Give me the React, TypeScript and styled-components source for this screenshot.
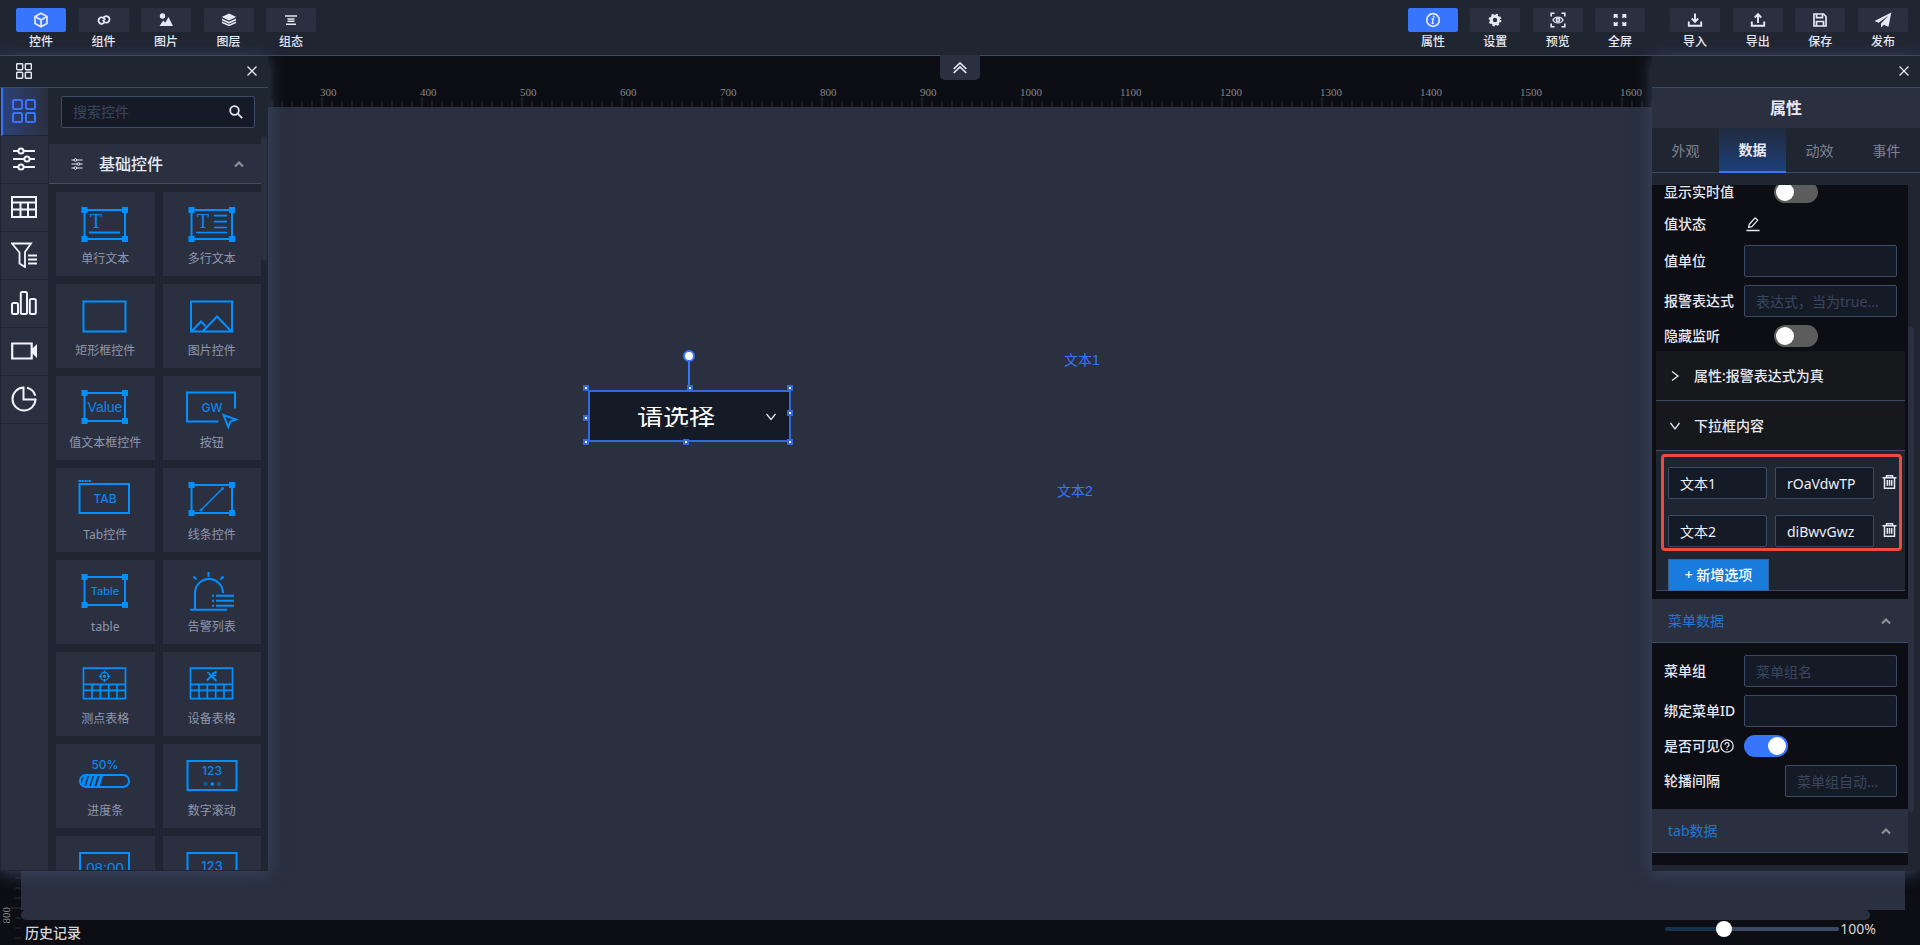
import React, { useState } from 'react';
import styled, { createGlobalStyle, css } from 'styled-components';

const color = {
  panel: '#202532',
  raised: '#2b3040',
  canvas: '#2a3040',
  ink: '#0d0e13',
  field: '#151b26',
  line: '#3d4a66',
  blue: '#3875ff',
  icon: '#0090ff',
  text: '#e6e9f5',
};

const GlobalStyle = createGlobalStyle`
  *, *::before, *::after { box-sizing: border-box; }
  html, body, #root { height: 100%; }
  body {
    margin: 0;
    background: ${color.ink};
    color: ${color.text};
    font: 14px/20px "Noto Sans", "Noto Sans CJK SC", sans-serif;
    overflow: hidden;
  }
  button, input, select { font: inherit; color: inherit; }
  button { border: 0; padding: 0; background: none; cursor: pointer; }
  svg { display: block; flex: none; }
`;

const Page = styled.div`
  display: flex;
  flex-direction: column;
  height: 100vh;
`;

/* ---------- header ---------- */

const Header = styled.header`
  display: flex;
  justify-content: space-between;
  height: 56px;
  padding: 8px 12px 0 16px;
  background: ${color.panel};
  border-bottom: 1px solid ${color.line};
`;

const ToolGroups = styled.div`
  display: flex;
  gap: 25px;
`;

const ToolGroup = styled.nav<{ $width: number }>`
  display: flex;
  justify-content: space-between;
  width: ${(p) => p.$width}px;
`;

const ToolButton = styled.button`
  display: flex;
  flex-direction: column;
  align-items: center;
  width: 50px;
  height: 44px;
  font-size: 12px;
  line-height: 20px;
  font-weight: 500;
`;

const ToolChip = styled.span<{ $active?: boolean }>`
  display: flex;
  align-items: center;
  justify-content: center;
  width: 50px;
  height: 24px;
  border-radius: 2px;
  background: ${(p) => (p.$active ? color.blue : color.raised)};
`;

/* ---------- workspace ---------- */

const Workspace = styled.main`
  position: relative;
  flex: 1;
  min-height: 0;
  display: grid;
  grid-template-columns: 21px minmax(0, 1fr);
  grid-template-rows: 51px minmax(0, 1fr) 10px 25px;
`;

const TopRuler = styled.div`
  grid-column: 2;
  display: flex;
  align-items: flex-end;
  overflow: hidden;
  background: repeating-linear-gradient(to right, #1b1d22 0 2px, transparent 2px 10px) 0 100% / 100% 6px no-repeat;
`;

const TopMark = styled.span`
  flex: 0 0 100px;
  height: 21px;
  color: #85868a;
  font: 11px/12px "Liberation Serif", serif;
  text-indent: -1px;
  background: linear-gradient(#1b1d22, #1b1d22) 0 100% / 2px 10px no-repeat;
`;

const SideRuler = styled.div`
  grid-column: 1;
  grid-row: 2 / 5;
  overflow: hidden;
  background: repeating-linear-gradient(to bottom, #1b1d22 0 2px, transparent 2px 10px) 100% 0 / 6px 100% no-repeat;
`;

const SideMark = styled.span`
  display: flex;
  align-items: flex-start;
  height: 100px;
  color: #85868a;
  font: 11px/12px "Liberation Serif", serif;
  background: linear-gradient(#1b1d22, #1b1d22) 100% 0 / 11px 2px no-repeat;

  span {
    writing-mode: vertical-rl;
    transform: rotate(180deg);
  }
`;

const Canvas = styled.section`
  position: relative;
  grid-column: 2;
  grid-row: 2;
  margin-right: 15px;
  background: ${color.canvas};
`;

const CanvasScroll = styled.div`
  grid-column: 2;
  grid-row: 3;
  margin-right: 50px;
  border-radius: 5px;
  background: ${color.raised};
`;

const Footer = styled.footer`
  grid-column: 2;
  grid-row: 4;
  display: flex;
  justify-content: space-between;
  padding: 0 44px 0 4px;
`;

const HistoryButton = styled.button`
  height: 25px;
  font-weight: 500;
  color: #d5d6da;
`;

const Zoom = styled.label`
  display: flex;
  align-items: center;
  gap: 1px;
  height: 18px;
  color: #d5d6da;
`;

const ZoomRange = styled.input`
  appearance: none;
  width: 174px;
  height: 4px;
  margin: 0;
  border-radius: 2px;

  &::-webkit-slider-thumb {
    appearance: none;
    width: 16px;
    height: 16px;
    border-radius: 50%;
    background: #fff;
  }
`;

const FoldButton = styled.button`
  position: absolute;
  top: -1px;
  left: calc(50% - 20px);
  width: 40px;
  height: 25px;
  display: flex;
  align-items: center;
  justify-content: center;
  border-radius: 0 0 5px 5px;
  background: ${color.raised};
`;

const CanvasLabel = styled.span<{ $x: number; $y: number }>`
  position: absolute;
  left: ${(p) => p.$x}px;
  top: ${(p) => p.$y}px;
  color: ${color.blue};
  font-family: "Liberation Sans", "Noto Sans CJK SC", sans-serif;
`;

const Selection = styled.div`
  position: absolute;
  left: 567px;
  top: 283px;
  width: 203px;
  height: 52px;
  border: 2px solid #3568d8;
  background: ${color.field};

  svg.chevron {
    position: absolute;
    right: 13px;
    top: 20px;
  }
`;

const CanvasSelect = styled.select`
  appearance: none;
  width: 100%;
  height: 48px;
  padding: 2px 27px 0 0;
  border: 0;
  outline: 0;
  background: transparent;
  color: #fff;
  font-size: 26px;
  text-align-last: center;
`;

const Handle = styled.i<{ $x: number; $y: number }>`
  position: absolute;
  left: ${(p) => p.$x}px;
  top: ${(p) => p.$y}px;
  width: 6px;
  height: 6px;
  border: 2px solid #3568d8;
  background: #fff;
`;

const RotateStem = styled.i`
  position: absolute;
  left: 98px;
  top: -30px;
  width: 2px;
  height: 26px;
  background: ${color.blue};
`;

const RotateKnob = styled.i`
  position: absolute;
  left: 93px;
  top: -42px;
  width: 12px;
  height: 12px;
  border: 2px solid ${color.blue};
  border-radius: 50%;
  background: #fff;
`;

/* ---------- floating panels ---------- */

const Panel = styled.aside<{ $side: 'left' | 'right' }>`
  position: absolute;
  ${(p) => p.$side}: 0;
  top: 0;
  bottom: 74px;
  width: 268px;
  display: flex;
  flex-direction: column;
  background: ${color.panel};
  box-shadow: 0 2px 16px #3a4763;
  clip-path: inset(-12px -24px -24px -24px);
`;

const PanelBar = styled.div`
  display: flex;
  flex: none;
  align-items: center;
  justify-content: space-between;
  height: 32px;
  padding: 0 11px 1px 16px;
  border-bottom: 1px solid ${color.line};
`;

const IconButton = styled.button`
  display: flex;
  align-items: center;
  justify-content: center;
`;

const PaletteBody = styled.div`
  display: flex;
  flex: 1;
  min-height: 0;
  padding: 0 1px 1px 1px;
`;

const Rail = styled.nav`
  flex: 0 0 47px;
  background: ${color.raised};
`;

const RailButton = styled.button<{ $active?: boolean }>`
  display: flex;
  align-items: center;
  justify-content: center;
  width: 100%;
  height: 48px;
  padding: 0 1px 1px 0;
  border-bottom: 1px solid ${color.panel};
  color: #f1f4ff;
  ${(p) =>
    p.$active &&
    css`
      padding-right: 3px;
      border-left: 2px solid ${color.blue};
      background: linear-gradient(to right, #2c4176, ${color.raised});
      color: ${color.blue};
    `}
`;

const Palette = styled.div`
  display: flex;
  flex: 1;
  flex-direction: column;
  min-width: 0;
  margin-left: 1px;
`;

const SearchBox = styled.label`
  display: flex;
  flex: none;
  align-items: center;
  height: 32px;
  margin: 8px 12px;
  padding: 0 11px;
  border: 1px solid ${color.line};
  border-radius: 2px;
  background: ${color.field};

  input {
    flex: 1;
    min-width: 0;
    padding: 0;
    border: 0;
    outline: 0;
    background: none;
  }
  input::placeholder { color: #3a4560; }
`;

const PaletteScroll = styled.div`
  display: flex;
  flex: 1;
  min-height: 0;
`;

const PaletteList = styled.div`
  flex: 1;
  overflow: hidden;
  padding-top: 8px;
`;

const ScrollThumb = styled.div<{ $height: string; $top?: string }>`
  flex: 0 0 6px;
  height: ${(p) => p.$height};
  margin-top: ${(p) => p.$top ?? 0};
  border-radius: 3px;
  background: ${color.raised};
`;

const GroupHeader = styled.button`
  display: flex;
  align-items: center;
  width: 100%;
  height: 40px;
  padding: 0 17px 0 22px;
  border-bottom: 1px solid #434c60;
  background: ${color.raised};
  font-size: 16px;
  font-weight: 500;

  span {
    flex: 1;
    padding-left: 16px;
    text-align: left;
  }
`;

const CardGrid = styled.div`
  display: grid;
  grid-template-columns: 1fr 1fr;
  gap: 8px;
  padding: 8px 0 0 7px;
`;

const Card = styled.button`
  display: flex;
  flex-direction: column;
  align-items: center;
  gap: 3px;
  height: 84px;
  padding-top: 11px;
  background: ${color.raised};
  color: #8f97ad;
  font-size: 12px;
  line-height: 18px;
`;

/* ---------- property panel ---------- */

const PanelTitle = styled.h2`
  flex: none;
  margin: 0;
  height: 40px;
  background: ${color.raised};
  font-size: 16px;
  line-height: 40px;
  font-weight: 700;
  text-align: center;
`;

const Tabs = styled.div`
  display: grid;
  flex: none;
  grid-template-columns: repeat(4, 1fr);
  height: 45px;
  border-bottom: 1px solid ${color.line};
`;

const Tab = styled.button<{ $active?: boolean }>`
  height: 45px;
  color: #7f8390;
  ${(p) =>
    p.$active &&
    css`
      color: ${color.text};
      font-weight: 700;
      border-bottom: 2px solid ${color.blue};
      background: linear-gradient(#202a3e, #1d3f78);
    `}
`;

const PropsBody = styled.div`
  display: flex;
  flex: 1;
  min-height: 0;
  padding: 12px 6px 6px 0;
`;

const PropsScroll = styled.div`
  flex: 1;
  min-width: 0;
  overflow: hidden;
  background: ${color.ink};
`;

const Fields = styled.div<{ $scrolled?: boolean }>`
  display: flex;
  flex-direction: column;
  gap: 8px;
  margin-top: ${(p) => (p.$scrolled ? '-4px' : 0)};
  padding: ${(p) => (p.$scrolled ? '0 11px 4px 12px' : '12px 11px 12px 12px')};
`;

const Field = styled.div<{ $height: number }>`
  display: flex;
  align-items: center;
  height: ${(p) => p.$height}px;
`;

const FieldLabel = styled.label`
  display: flex;
  flex: 0 0 80px;
  align-items: center;
  font-weight: 500;
  white-space: nowrap;
`;

const TextInput = styled.input<{ $indent?: boolean }>`
  flex: 1;
  min-width: 0;
  width: 100%;
  height: 32px;
  margin: 0 0 0 ${(p) => (p.$indent ? '41px' : 0)};
  padding: 0 11px;
  border: 1px solid ${color.line};
  border-radius: 2px;
  outline: 0;
  background: ${color.field};
  color: #eceefa;
  text-overflow: ellipsis;

  &::placeholder { color: #3a4560; }
`;

const Switch = styled.input<{ $indent?: boolean }>`
  appearance: none;
  width: 44px;
  height: 22px;
  margin: 0 0 0 ${(p) => (p.$indent ? '30px' : 0)};
  padding: 2px;
  border-radius: 11px;
  background: #5c5c5c;

  &::before {
    content: '';
    display: block;
    width: 18px;
    height: 18px;
    border-radius: 50%;
    background: #fff;
  }
  &:checked { background: ${color.blue}; }
  &:checked::before { margin-left: auto; }
`;

const Folds = styled.div`
  margin: 0 3px 8px 4px;
  border-radius: 2px;
`;

const FoldHeader = styled.button`
  display: flex;
  align-items: center;
  gap: 13px;
  width: 100%;
  height: 50px;
  padding: 0 13px;
  border-bottom: 1px solid ${color.line};
  background: #17181c;
  font-weight: 500;
`;

const FoldBody = styled.div`
  height: 140px;
  padding: 3px 3px 0 5px;
  border-bottom: 1px solid ${color.line};
  background: ${color.panel};
`;

const OptionFrame = styled.div`
  display: flex;
  flex-direction: column;
  gap: 16px;
  height: 97px;
  padding: 10px 2px 0 4px;
  border: 3px solid #ef4a41;
  border-radius: 4px;
`;

const OptionRow = styled.div`
  display: grid;
  grid-template-columns: 1fr 1fr 15px;
  column-gap: 8px;
`;

const OptionDelete = styled(IconButton)`
  height: 30px;
`;

const AddButton = styled.button`
  width: 101px;
  height: 32px;
  margin: 8px 0 0 7px;
  border: 1px solid #3a5f96;
  background: #197bdb;
  color: #fff;
  font-weight: 500;
`;

const SectionHeader = styled.button`
  display: flex;
  align-items: center;
  justify-content: space-between;
  width: 100%;
  height: 44px;
  padding: 0 17px 0 16px;
  border-bottom: 1px solid ${color.line};
  background: ${color.raised};
  color: #1f78cf;
`;

/* ---------- icons ---------- */

type IconProps = { w?: number; h?: number; box?: string; sw?: number; children: React.ReactNode; className?: string };

const Icon = ({ w = 16, h = w, box, sw = 2, children, className }: IconProps) => (
  <svg width={w} height={h} viewBox={box ?? `0 0 ${w} ${h}`} fill="none" stroke="currentColor" strokeWidth={sw} className={className} aria-hidden="true">
    {children}
  </svg>
);

const GridIcon = ({ size, sw = 2 }: { size: number; sw?: number }) => (
  <Icon w={size} box="0 0 24 24" sw={sw}>
    <rect x="1" y="1" width="9" height="9" rx="1.5" />
    <rect x="14" y="1" width="9" height="9" rx="1.5" />
    <rect x="1" y="14" width="9" height="9" rx="1.5" />
    <rect x="14" y="14" width="9" height="9" rx="1.5" />
  </Icon>
);

const SlidersIcon = ({ size }: { size: number }) => (
  <Icon w={size} box="0 0 24 24">
    <path d="M1 4h5M12 4h11M1 12h11M18 12h5M1 20h5M12 20h11" />
    <circle cx="9" cy="4" r="2.6" />
    <circle cx="15" cy="12" r="2.6" />
    <circle cx="9" cy="20" r="2.6" />
  </Icon>
);

const CloseIcon = () => (
  <Icon w={10} sw={1.3}>
    <path d="M0.5 0.5l9 9M9.5 0.5l-9 9" />
  </Icon>
);

const CaretIcon = () => (
  <Icon w={10} sw={2.2}>
    <path d="M1 7.5l4-4 4 4" stroke="#8d9198" />
  </Icon>
);

const tool = {
  cube: <Icon sw={1.7}><path d="M8 1.2l6 3.2v7.2l-6 3.2-6-3.2V4.4zM2.2 4.6L8 8l5.8-3.4M8 8v6.5" strokeLinejoin="round" /></Icon>,
  link: <Icon sw={1.8}><path d="M8.6 9.9A3.200 3.200 0 1 1 7.700 6.100L9.300 8M7.400 6.100A3.200 3.200 0 1 1 8.300 9.900L6.700 8" /></Icon>,
  picture: <Icon><g fill="currentColor" stroke="none"><circle cx="4.500" cy="4" r="2.700" /><path d="M1.500 14l3.700-5.500 2 2.300L10.500 5 15 14z" /></g></Icon>,
  layers: <Icon sw={1.2}><path d="M8 1.500L15.300 5 8 8.500.7 5z" fill="currentColor" stroke="none" /><path d="M1 7.500l7 3.300 7-3.300M1 10.200l7 3.300 7-3.300" strokeWidth="1.500" /></Icon>,
  lines: <Icon sw={1.4}><path d="M2 4h12M4.500 7h7M4.500 9.200h7M3 12.200h10" /></Icon>,
  info: <Icon sw={1.7}><circle cx="8" cy="8" r="6.300" /><path d="M6.600 7h1.600l-.9 4.200h1.600" strokeWidth="1.400" /><circle cx="8.700" cy="4.700" r="1" fill="currentColor" stroke="none" /></Icon>,
  gear: <Icon sw={3}><circle cx="8" cy="8" r="3.700" /><circle cx="8" cy="8" r="5.500" strokeWidth="1.800" strokeDasharray="2.300 2.020" /></Icon>,
  preview: <Icon sw={1.6}><path d="M1.200 4.500V1.200H4.500M11.500 1.200h3.300V4.500M14.800 11.500v3.300H11.500M4.500 14.800H1.200V11.500" /><path d="M2.800 8c2.600-4 7.800-4 10.400 0-2.600 4-7.800 4-10.400 0z" strokeWidth="1.200" /><circle cx="8" cy="8" r="1.600" /></Icon>,
  full: <Icon sw={1.7}><path d="M2.500 6V2.800h3.200M2.700 3l3 2.700M10.300 2.800h3.200V6M13.300 3l-3 2.700M2.500 10v3.200h3.200M2.700 13l3-2.700M13.500 10v3.200h-3.200M13.300 13l-3-2.700" /></Icon>,
  importing: <Icon sw={1.9}><path d="M1.800 9.500v4.300h12.400V9.500M8 1.500v7M4.800 6.500L8 9.800l3.200-3.300" /></Icon>,
  exporting: <Icon sw={1.9}><path d="M1.800 9.500v4.300h12.400V9.500M8 11V3M4.800 5.500L8 2.200l3.200 3.300" /></Icon>,
  save: <Icon sw={1.7}><path d="M2 2h9.500L14 4.500V14H2zM4.500 14V9.500h7V14" /><path d="M4.500 2v3.700h6V2" /></Icon>,
  send: <Icon w={18} h={16}><path d="M17.300.5L.5 9l4.200 1.800L14.500 3.500l-7.500 8v4l2.800-2.800 4.700 2z" fill="currentColor" stroke="none" /></Icon>,
};

const railIcons: [string, React.ReactNode][] = [
  ['基础控件', <GridIcon size={24} />],
  ['参数', <SlidersIcon size={24} />],
  ['表格', <Icon w={26} h={22}><path d="M1 1h24v20H1zM1 6.500h24M1 13.500h24M9.500 6.500V21M17 6.500V21" /></Icon>],
  ['筛选', <Icon w={26} sw={1.8}><path d="M1 1.500h19l-6 8.500v15l-5.500-3.500V10.500zM17 13.500h9M17 17.500h9M17 21.500h9" /></Icon>],
  ['图表', <Icon w={26} h={24} sw={2}><rect x="1" y="12" width="6" height="11" rx="1.500" /><rect x="9.800" y="1" width="6.200" height="22" rx="1.500" /><rect x="18.800" y="8" width="6" height="15" rx="1.500" /></Icon>],
  ['视频', <Icon w={26} h={18} sw={2.2}><path d="M1.200 1.500h19.500v15H1.200z" /><path d="M21 7l5-5v14l-5-5z" fill="currentColor" stroke="none" /></Icon>],
  ['饼图', <Icon w={26} sw={2}><path d="M12.500 1.500a11.500 11.500 0 1 0 12 12h-12z" /><path d="M16 1.700a11.500 11.500 0 0 1 8.300 8" /></Icon>],
];

/* palette drawings share a 60×44 box */
const Art = ({ children }: { children: React.ReactNode }) => (
  <svg width="60" height="44" viewBox="0 0 60 44" fill="none" stroke={color.icon} strokeWidth="2" fontFamily='"Liberation Sans", sans-serif' aria-hidden="true">
    {children}
  </svg>
);

type WordProps = { x?: number; y: number; size: number; face?: 'plain' | 'medium' | 'slab'; children: string };

const faces = {
  plain: '"Liberation Sans", sans-serif',
  medium: 'Inter, sans-serif',
  slab: '"DejaVu Serif", serif',
};

const Word = ({ x = 30, y, size, face = 'plain', children }: WordProps) => (
  <text x={x} y={y} fontSize={size} fontWeight={face === 'medium' ? 500 : 400} fontFamily={faces[face]} textAnchor="middle" fill="#0a86ec" stroke="none">
    {children}
  </text>
);

const Framed = ({ top, bottom }: { top: number; bottom: number }) => (
  <>
    <rect x="9.500" y={top} width="40.500" height={bottom - top} />
    {[9.5, 50].map((x) => [top, bottom].map((y) => (
      <rect key={`${x}-${y}`} x={x - 3} y={y - 3} width="6" height="6" fill={color.icon} stroke="none" />
    )))}
  </>
);

const TableFrame = () => <path d="M8.500 5.200h42v30.400h-42zM8.500 21.300h42M8.500 27.300h42M17 21.300v14M25.300 21.300v14M33.700 21.300v14M42 21.300v14" strokeWidth="1.700" />;

const cards: [string, React.ReactNode][] = [
  ['单行文本', <><Framed top={7} bottom={36} /><Word x={21} y={25} size={18} face="slab">T</Word><path d="M14 29.500h31" /></>],
  ['多行文本', <><Framed top={7} bottom={36} /><Word x={21} y={25} size={18} face="slab">T</Word><path d="M32 12.700h13M32 18.700h13M32 24.500h13M14 29.500h31" strokeWidth="1.700" /></>],
  ['矩形框控件', <path d="M8.500 6.500h42v30h-42z" />],
  ['图片控件', <path d="M9 6.500h41v30H9zM10 36l9-9.500 4.700 4.700M20.500 36.500L35 21.500l14.500 15" />],
  ['值文本框控件', <><Framed top={6} bottom={34} /><Word y={25} size={14}>Value</Word></>],
  ['按钮', <><path d="M53 21.500V5.500H5v29h31.500" /><path d="M41.500 28l12.500 4.500-5.500 2-2.200 5.500z" /><Word y={25} size={12} face="medium">GW</Word></>],
  ['Tab控件', <><path d="M4.500 5h49.500v29H4.500z" /><path d="M3.500 2h13" strokeDasharray="2.500 0.800" /><Word y={24} size={12} face="medium">TAB</Word></>],
  ['线条控件', <><Framed top={6} bottom={34} /><path d="M19 31L40.500 9.500" strokeWidth="1.500" /><circle cx="19" cy="31" r="0.500" /><circle cx="40.500" cy="9.500" r="0.500" /></>],
  ['table', <><Framed top={6} bottom={34} /><Word y={24} size={11} face="medium">Table</Word></>],
  ['告警列表', <path d="M13 38.500V22a14 14 0 0 1 28 0M8.300 38.700H45M26.500 1v4.700M11.500 5.500l3 3M41.500 5.500l-3 3M34 24.700h18M34 29.700h18M34 34.700h18M30 24.700h2M30 29.700h2M30 34.700h2" />],
  ['测点表格', <><TableFrame /><circle cx="29.500" cy="13.300" r="4" strokeWidth="1.300" /><circle cx="29.500" cy="13.300" r="0.700" /><path d="M29.500 7.500v3M29.500 16v3M23.700 13.300h3M32.300 13.300h3" strokeWidth="1.300" /></>],
  ['设备表格', <><TableFrame /><path d="M25 17.500l4.500-4.500M32 10.500l2.500-2M27 10.500l7.500 7.500" strokeWidth="2" /><path d="M25 9.500l2.500.5M31 9v3.500h3.500" strokeWidth="1.500" /></>],
  ['进度条', <><Word y={14} size={12} face="medium">50%</Word><rect x="5" y="20" width="49" height="12" rx="6" /><path d="M11 20.500L7.500 31M16 20.500L12.500 31.500M21 20.500L17.500 31.500M26.500 20.500L23 31.500" strokeWidth="3.200" /></>],
  ['数字滚动', <><path d="M5.500 6h49v29h-49z" /><Word y={20} size={12} face="medium">123</Word><circle cx="23.700" cy="29" r="1.500" strokeWidth="0.700" /><circle cx="30.300" cy="29" r="1.500" fill={color.icon} strokeWidth="0.700" /><circle cx="37" cy="29" r="1.500" strokeWidth="0.700" /></>],
  ['时钟', <><path d="M5 6h49v29H5z" /><Word y={26} size={15}>08:00</Word></>],
  ['数字', <><path d="M5.500 6h49v29h-49z" /><Word y={24} size={13} face="medium">123</Word></>],
];

const TrashIcon = () => (
  <Icon w={15} h={14} sw={1.5}>
    <path d="M0.500 2.700h14M4.500 2.500V0.800h6v1.700M2.500 3v10.200h10V3M5.300 5v5.700M7.500 5v5.700M9.700 5v5.700" />
  </Icon>
);

const ChevronDown = ({ className }: { className?: string }) => (
  <Icon w={10} sw={1.2} className={className}><path d="M0.500 2l4.500 5.500L9.500 2" /></Icon>
);

const leftTools: [string, React.ReactNode][] = [['控件', tool.cube], ['组件', tool.link], ['图片', tool.picture], ['图层', tool.layers], ['组态', tool.lines]];
const viewTools: [string, React.ReactNode][] = [['属性', tool.info], ['设置', tool.gear], ['预览', tool.preview], ['全屏', tool.full]];
const fileTools: [string, React.ReactNode][] = [['导入', tool.importing], ['导出', tool.exporting], ['保存', tool.save], ['发布', tool.send]];

const Tools = ({ items, width, active }: { items: [string, React.ReactNode][]; width: number; active?: string }) => (
  <ToolGroup $width={width}>
    {items.map(([name, icon]) => (
      <ToolButton key={name}>
        <ToolChip $active={name === active}>{icon}</ToolChip>
        {name}
      </ToolButton>
    ))}
  </ToolGroup>
);

const marks = Array.from({ length: 19 }, (_, i) => i * 100);

const handles = [[-7, -7], [97, -7], [197, -7], [-7, 23], [197, 18], [-7, 47], [93, 47], [197, 47]];

export default function App() {
  const [zoom, setZoom] = useState(32);
  const [options, setOptions] = useState([['文本1', 'rOaVdwTP'], ['文本2', 'diBwvGwz']]);

  const edit = (row: number, col: number, value: string) =>
    setOptions(options.map((o, r) => (r === row ? o.map((v, c) => (c === col ? value : v)) : o)));

  return (
    <Page>
      <GlobalStyle />
      <Header>
        <Tools items={leftTools} width={300} active="控件" />
        <ToolGroups>
          <Tools items={viewTools} width={237} active="属性" />
          <Tools items={fileTools} width={238} />
        </ToolGroups>
      </Header>

      <Workspace>
        <TopRuler>{marks.map((m) => <TopMark key={m}>{m}</TopMark>)}</TopRuler>
        <SideRuler>{marks.slice(0, 9).map((m) => <SideMark key={m}><span>{m}</span></SideMark>)}</SideRuler>

        <Canvas>
          <Selection>
            <CanvasSelect aria-label="下拉框"><option>请选择</option></CanvasSelect>
            <ChevronDown className="chevron" />
            <RotateStem />
            <RotateKnob />
            {handles.map(([x, y]) => <Handle key={`${x},${y}`} $x={x} $y={y} />)}
          </Selection>
          <CanvasLabel $x={1043} $y={243}>文本1</CanvasLabel>
          <CanvasLabel $x={1036} $y={374}>文本2</CanvasLabel>
        </Canvas>
        <CanvasScroll />

        <Footer>
          <HistoryButton>历史记录</HistoryButton>
          <Zoom>
            <ZoomRange
              type="range"
              aria-label="缩放"
              value={zoom}
              onChange={(e) => setZoom(Number(e.target.value))}
              style={{ background: `linear-gradient(to right, #15334f ${zoom}%, ${color.line} ${zoom}%)` }}
            />
            100%
          </Zoom>
        </Footer>

        <FoldButton aria-label="收起">
          <Icon w={14} h={12} sw={1.7}><path d="M0.700 7l6.300-6 6.300 6M0.700 11l6.300-6 6.300 6" /></Icon>
        </FoldButton>

        <Panel $side="left">
          <PanelBar>
            <GridIcon size={16} sw={2.2} />
            <IconButton aria-label="关闭"><CloseIcon /></IconButton>
          </PanelBar>
          <PaletteBody>
            <Rail>
              {railIcons.map(([name, icon], i) => (
                <RailButton key={name} aria-label={name} $active={i === 0}>{icon}</RailButton>
              ))}
            </Rail>
            <Palette>
              <SearchBox>
                <input type="text" aria-label="搜索控件" placeholder="搜索控件" />
                <Icon w={14} sw={1.8}><circle cx="5.500" cy="5.500" r="4.300" /><path d="M8.700 8.700l4.500 4.500" /></Icon>
              </SearchBox>
              <PaletteScroll>
                <PaletteList>
                  <GroupHeader>
                    <SlidersIcon size={12} />
                    <span>基础控件</span>
                    <CaretIcon />
                  </GroupHeader>
                  <CardGrid>
                    {cards.map(([name, art]) => <Card key={name}><Art>{art}</Art>{name}</Card>)}
                  </CardGrid>
                </PaletteList>
                <ScrollThumb $height="17%" />
              </PaletteScroll>
            </Palette>
          </PaletteBody>
        </Panel>

        <Panel $side="right">
          <PanelBar>
            <span />
            <IconButton aria-label="关闭"><CloseIcon /></IconButton>
          </PanelBar>
          <PanelTitle>属性</PanelTitle>
          <Tabs>
            <Tab>外观</Tab>
            <Tab $active>数据</Tab>
            <Tab>动效</Tab>
            <Tab>事件</Tab>
          </Tabs>
          <PropsBody>
            <PropsScroll>
              <Fields $scrolled>
                <Field $height={22}>
                  <FieldLabel htmlFor="live">显示实时值</FieldLabel>
                  <Switch id="live" type="checkbox" $indent />
                </Field>
                <Field $height={26}>
                  <FieldLabel htmlFor="state">值状态</FieldLabel>
                  <IconButton id="state" aria-label="编辑值状态">
                    <Icon w={18} h={16} sw={1.3}><path d="M2.500 14.500h13M5.300 8.300l5.800-6.500 2.600 2.300-5.800 6.500-3.200.8z" /></Icon>
                  </IconButton>
                </Field>
                <Field $height={32}>
                  <FieldLabel htmlFor="unit">值单位</FieldLabel>
                  <TextInput id="unit" />
                </Field>
                <Field $height={32}>
                  <FieldLabel htmlFor="alarm">报警表达式</FieldLabel>
                  <TextInput id="alarm" placeholder="表达式，当为true..." />
                </Field>
                <Field $height={22}>
                  <FieldLabel htmlFor="mute">隐藏监听</FieldLabel>
                  <Switch id="mute" type="checkbox" $indent />
                </Field>
              </Fields>

              <Folds>
                <FoldHeader>
                  <Icon w={12} h={10} sw={1.3}><path d="M3 0.500l6 4.500-6 4.500" /></Icon>
                  属性:报警表达式为真
                </FoldHeader>
                <FoldHeader>
                  <Icon w={12} h={10} sw={1.3}><path d="M1.500 2l4.500 6 4.500-6" /></Icon>
                  下拉框内容
                </FoldHeader>
                <FoldBody>
                  <OptionFrame>
                    {options.map(([label, value], i) => (
                      <OptionRow key={i}>
                        <TextInput aria-label={`选项${i + 1}文本`} value={label} onChange={(e) => edit(i, 0, e.target.value)} />
                        <TextInput aria-label={`选项${i + 1}值`} value={value} onChange={(e) => edit(i, 1, e.target.value)} />
                        <OptionDelete aria-label="删除"><TrashIcon /></OptionDelete>
                      </OptionRow>
                    ))}
                  </OptionFrame>
                  <AddButton>+ 新增选项</AddButton>
                </FoldBody>
              </Folds>

              <SectionHeader>菜单数据<CaretIcon /></SectionHeader>
              <Fields>
                <Field $height={32}>
                  <FieldLabel htmlFor="group">菜单组</FieldLabel>
                  <TextInput id="group" placeholder="菜单组名" />
                </Field>
                <Field $height={32}>
                  <FieldLabel htmlFor="menu-id">绑定菜单ID</FieldLabel>
                  <TextInput id="menu-id" />
                </Field>
                <Field $height={22}>
                  <FieldLabel htmlFor="visible">
                    是否可见
                    <Icon w={14} sw={1.3}><circle cx="7" cy="7" r="6.200" /><path d="M5 5.800a2 2 0 1 1 2.800 1.700Q7 7.900 7 8.800M7 9.700v1.300" /></Icon>
                  </FieldLabel>
                  <Switch id="visible" type="checkbox" defaultChecked />
                </Field>
                <Field $height={32}>
                  <FieldLabel htmlFor="interval">轮播间隔</FieldLabel>
                  <TextInput id="interval" $indent placeholder="菜单组自动..." />
                </Field>
              </Fields>
              <SectionHeader>tab数据<CaretIcon /></SectionHeader>
            </PropsScroll>
            <ScrollThumb $height="485px" $top="142px" />
          </PropsBody>
        </Panel>
      </Workspace>
    </Page>
  );
}
